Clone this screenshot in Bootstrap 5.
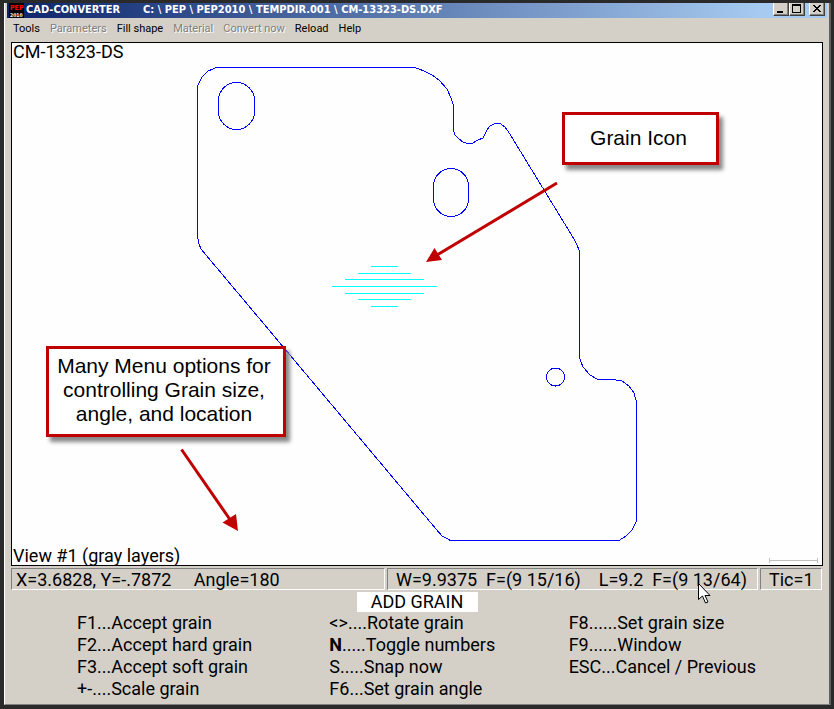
<!DOCTYPE html>
<html lang="en">
<head>
<meta charset="utf-8">
<meta name="viewport" content="width=device-width, initial-scale=1">
<title>CAD-CONVERTER</title>
<link rel="stylesheet" href="https://cdn.jsdelivr.net/npm/bootstrap@5.3.0/dist/css/bootstrap.min.css">
<style>
  body { background: #2a2a2a; color: #000; padding: 3px 3px 4px; font-family: Roboto, sans-serif; font-size: 18px; line-height: 22px; }
  button { color: inherit; font: inherit; background: none; border: 0; padding: 0; text-align: left; white-space: pre; }
  .app-window { background: #d4d0c8; border: 1px solid #fff; border-top: 0; border-right: 2px solid #606060; border-bottom-color: #808080; padding: 0 2px 2px; margin-left: 1px; }
  .title-strip { height: 15px; background: linear-gradient(90deg, #0a246a, #a6caf0 92%); color: #fff; font: bold 11px/13px "DejaVu Sans Condensed", "DejaVu Sans", sans-serif; white-space: pre; padding: 0 2px; }
  .app-icon { margin-right: 2px; }
  .path-label { margin-left: 23px; }
  .win-btn { width: 16px; height: 13px; background: #d4d0c8; border: 1px solid #404040; border-top: 0; border-left-color: #fff; box-shadow: inset -1px -1px #808080; }
  .win-btn svg { display: block; }
  .menu-strip { height: 24px; padding: 0 6px; gap: 10px; font: 11px/22px Roboto, sans-serif; align-items: flex-start; }
  .menu-strip button:disabled { color: #808080; text-shadow: 1px 1px #fff; }
  .drawing { background: #fefefe; border: 1px solid #000; margin: 0 4px 2px 4px; position: relative; overflow: hidden; }
  .drawing svg { display: block; }
  .corner-label { position: absolute; left: 1px; line-height: 18px; }
  .callout { position: absolute; background: #fff; border: 3px solid #c00000; box-shadow: 4px 5px 4px #888; font: 21px/24px "Liberation Sans", Arial, sans-serif; text-align: center; }
  .callout-icon { left: 550px; top: 69px; width: 157px; padding: 11px 4px 12px 0; }
  .callout-menu { left: 34px; top: 303px; width: 240px; padding: 5px 8px 8px 4px; }
  .status-strip { display: grid; grid-template-columns: 374fr 371fr 62fr; gap: 2px; margin: 0 5px 2px 4px; }
  .status-cell { height: 22px; border: 1px solid #fff; border-top-color: #808080; border-left-color: #808080; line-height: 21px; white-space: pre; position: relative; padding-left: 4px; }
  .status-cell + .status-cell { padding-left: 8px; }
  .pointer { position: absolute; left: 310px; top: 14px; z-index: 2; }
  .mode-label { background: #fff; width: 121px; line-height: 20px; text-align: center; margin: 0 auto; }
  .key-grid { display: grid; grid-template-columns: 252fr 239fr 258fr; padding-left: 70px; padding-bottom: 2px; }
  .key-grid button { display: block; height: 22px; }
</style>
</head>
<body>
<main class="app-window">
  <header class="title-strip d-flex">
    <svg class="app-icon" width="15" height="15" aria-hidden="true"><rect width="15" height="15"/><text x="1" y="7" fill="#f00" font-size="7">PEP</text><text x="1" y="14" fill="#fff" font-size="5">2010</text></svg>
    <span>CAD-CONVERTER</span><span class="path-label">C: \ PEP \ PEP2010 \ TEMPDIR.001 \ CM-13323-DS.DXF</span>
    <div class="d-flex ms-auto">
      <button class="win-btn" aria-label="Minimize"><svg width="14" height="12"><path d="M3 8h6v2H3z"/></svg></button>
      <button class="win-btn me-1" aria-label="Maximize"><svg width="14" height="12"><path d="M2 1h9v9H2zM3 3v6h7V3z" fill-rule="evenodd"/></svg></button>
      <button class="win-btn" aria-label="Close"><svg width="14" height="12" shape-rendering="crispEdges"><path d="M3 2h2v1h1v1h2V3h1V2h2v1h-1v1H9v1H8v1h1v1h1v1h1v1H9V8H8V7H6v1H5v1H3V8h1V7h1V6h1V5H5V4H4V3H3z"/></svg></button>
    </div>
  </header>
  <nav class="menu-strip d-flex">
    <button>Tools</button><button disabled>Parameters</button><button>Fill shape</button><button disabled>Material</button><button disabled>Convert now</button><button>Reload</button><button>Help</button>
  </nav>
  <section class="drawing">
    <svg width="100%" height="522" role="img" aria-label="Part outline with grain direction">
      <g transform="translate(-12 -43)" fill="none">
        <g stroke="#0000ff" shape-rendering="crispEdges">
          <path d="M216.500 67.500H415L424 71L432 75L439 80L447 89L451 98L453.500 106V131L455 135L459 139L463 142L467 143.500H472L478 140L483 138L487 130L490 126L494 124L497 123.500L501 124L505 127L508 131L574 239L577 245L579.500 251V358L583 367L590 375L598 379.500H613L622 381L629 386L634 393L636.500 402V521L632 530L626 536L619 540.500H450.500L442 536L436 529L201 249L199 244L197.500 237V86L202 77L208 71Z"/>
          <rect x="218.500" y="82.500" width="36" height="47" rx="18"/>
          <rect x="433.500" y="168.500" width="35" height="48" rx="17.500"/>
          <circle cx="555.500" cy="377" r="9"/>
        </g>
        <path stroke="#0ff" d="M371 266.500h27M358 273.500h53M345 279.500h79M332 286.500h105M345 293.500h79M358 299.500h53M371 306.500h27"/>
        <path stroke="#c0c0c0" d="M769 560.500h49M769.500 558v5M817.500 558v5"/>
        <path stroke="#c00000" stroke-width="3" d="M557 183L437 255M181.500 449.500L231 521"/>
        <path fill="#c00000" d="M426 262L434.500 248L442 260zM238 531L222.500 522.500L236 514z"/>
      </g>
    </svg>
    <span class="corner-label top-0">CM-13323-DS</span>
    <span class="corner-label bottom-0">View #1 (gray layers)</span>
    <div class="callout callout-icon">Grain Icon</div>
    <div class="callout callout-menu">Many Menu options for controlling Grain size, angle, and location</div>
  </section>
  <section class="status-strip">
    <div class="status-cell">X=3.6828, Y=-.7872     Angle=180</div>
    <div class="status-cell">W=9.9375  F=(9 15/16)    L=9.2  F=(9 13/64)<svg class="pointer" width="13" height="21" aria-hidden="true"><path d="M.5 .5V16.500L4.500 13L7.500 20L10 19L7 12.500H12z" fill="#fff" stroke="#000"/></svg></div>
    <div class="status-cell">Tic=1</div>
  </section>
  <div class="mode-label">ADD GRAIN</div>
  <section class="key-grid">
    <div><button>F1...Accept grain</button><button>F2...Accept hard grain</button><button>F3...Accept soft grain</button><button>+-....Scale grain</button></div>
    <div><button>&lt;&gt;....Rotate grain</button><button><span class="fw-bold">N</span>.....Toggle numbers</button><button>S.....Snap now</button><button>F6...Set grain angle</button></div>
    <div><button>F8......Set grain size</button><button>F9......Window</button><button>ESC...Cancel / Previous</button></div>
  </section>
</main>
<script src="https://cdn.jsdelivr.net/npm/bootstrap@5.3.0/dist/js/bootstrap.bundle.min.js"></script>
</body>
</html>
